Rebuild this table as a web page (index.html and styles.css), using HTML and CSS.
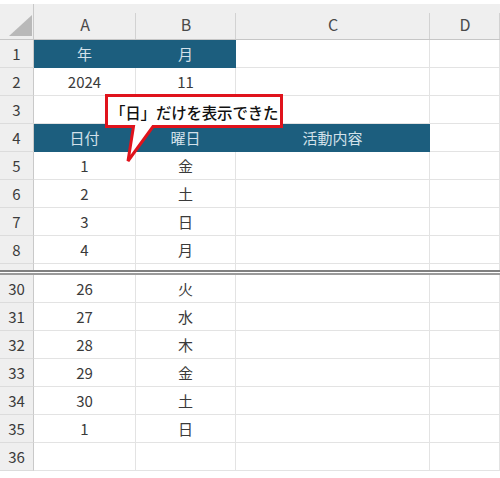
FILE: index.html
```html
<!DOCTYPE html>
<html lang="ja">
<head>
<meta charset="utf-8">
<link rel="stylesheet" href="styles.css">
</head>
<body>
<div class="sheet">
  <div class="topstrip"></div>
  <div class="row colhead">
    <div class="rh corner"><span class="tri"></span></div>
    <div class="c">A</div>
    <div class="c">B</div>
    <div class="c">C</div>
    <div class="c">D</div>
  </div>
  <div class="row"><div class="rh">1</div><div class="c dark">年</div><div class="c dark">月</div><div class="c"></div><div class="c"></div></div>
  <div class="row"><div class="rh">2</div><div class="c">2024</div><div class="c">11</div><div class="c"></div><div class="c"></div></div>
  <div class="row"><div class="rh">3</div><div class="c"></div><div class="c"></div><div class="c"></div><div class="c"></div></div>
  <div class="row"><div class="rh">4</div><div class="c dark">日付</div><div class="c dark">曜日</div><div class="c dark">活動内容</div><div class="c"></div></div>
  <div class="row"><div class="rh">5</div><div class="c">1</div><div class="c">金</div><div class="c"></div><div class="c"></div></div>
  <div class="row"><div class="rh">6</div><div class="c">2</div><div class="c">土</div><div class="c"></div><div class="c"></div></div>
  <div class="row"><div class="rh">7</div><div class="c">3</div><div class="c">日</div><div class="c"></div><div class="c"></div></div>
  <div class="row"><div class="rh">8</div><div class="c">4</div><div class="c">月</div><div class="c"></div><div class="c"></div></div>
  <div class="row partial"><div class="rh"></div><div class="c"></div><div class="c"></div><div class="c"></div><div class="c"></div></div>
  <div class="split"></div>
  <div class="row"><div class="rh">30</div><div class="c">26</div><div class="c">火</div><div class="c"></div><div class="c"></div></div>
  <div class="row"><div class="rh">31</div><div class="c">27</div><div class="c">水</div><div class="c"></div><div class="c"></div></div>
  <div class="row"><div class="rh">32</div><div class="c">28</div><div class="c">木</div><div class="c"></div><div class="c"></div></div>
  <div class="row"><div class="rh">33</div><div class="c">29</div><div class="c">金</div><div class="c"></div><div class="c"></div></div>
  <div class="row"><div class="rh">34</div><div class="c">30</div><div class="c">土</div><div class="c"></div><div class="c"></div></div>
  <div class="row"><div class="rh">35</div><div class="c">1</div><div class="c">日</div><div class="c"></div><div class="c"></div></div>
  <div class="row"><div class="rh">36</div><div class="c"></div><div class="c"></div><div class="c"></div><div class="c"></div></div>

  <div class="callout">
    <svg class="bubble" width="190" height="75" viewBox="0 0 190 75">
      <path d="M1.5 1.5 H176.5 V32.5 H48 L23 67 L28.5 32.5 H1.5 Z" fill="#fff" stroke="#e0131c" stroke-width="3" stroke-linejoin="miter"/>
    </svg>
    <div class="callout-text">「日」だけを表示できた</div>
  </div>
</div>
</body>
</html>
```

FILE: styles.css
```css
html, body {
  margin: 0;
  padding: 0;
  background: #fff;
}
body {
  font-family: "Noto Sans CJK JP", "Noto Sans", sans-serif;
  color: #3a3a3a;
}
.sheet {
  position: relative;
  width: 500px;
  height: 478px;
  overflow: hidden;
}
.topstrip {
  height: 4px;
  background: #fff;
}
.row {
  display: grid;
  grid-template-columns: 34px 102px 100px 194px 70px;
  height: 28px;
}
.rh {
  background: #efefef;
  border-right: 1px solid #c9c9c9;
  border-bottom: 1px solid #dcdcdc;
  display: flex;
  align-items: center;
  justify-content: center;
  font-size: 15px;
  color: #3c3c3c;
  box-sizing: border-box;
}
.c {
  border-right: 1px solid #e3e3e3;
  border-bottom: 1px solid #e3e3e3;
  display: flex;
  align-items: center;
  justify-content: center;
  font-size: 15px;
  box-sizing: border-box;
  color: #3a3a3a;
}
.c.dark {
  background: #1c5e7e;
  border-color: #1c5e7e;
  color: #d3e1ea;
}
.colhead {
  height: 36px;
  background: #efefef;
  border-bottom: 1px solid #c6c6c6;
  box-sizing: border-box;
}
.colhead .c {
  position: relative;
  border: none;
  color: #4a4a4a;
  font-size: 16px;
  padding-top: 5px;
}
.colhead .c::after {
  content: "";
  position: absolute;
  right: 0;
  top: 9px;
  bottom: 0;
  width: 1px;
  background: #d2d2d2;
}
.colhead .rh {
  border-bottom: none;
  border-right: 1px solid #c9c9c9;
}
.corner {
  position: relative;
}
.tri {
  position: absolute;
  right: 1px;
  bottom: 3px;
  width: 23px;
  height: 21px;
  background: #b9b9b9;
  clip-path: polygon(100% 0, 100% 100%, 0 100%);
}
.row.partial {
  height: 6px;
}
.row.partial .c,
.row.partial .rh {
  border-bottom: none;
}
.split {
  height: 5px;
  box-sizing: border-box;
  border-top: 2px solid #808080;
  border-bottom: 2px solid #9a9a9a;
  background: #fff;
}
.callout {
  position: absolute;
  left: 105px;
  top: 94px;
  width: 190px;
  height: 75px;
}
.bubble {
  position: absolute;
  left: 0;
  top: 0;
  display: block;
}
.callout-text {
  position: absolute;
  left: 5px;
  top: 5px;
  width: 170px;
  height: 25px;
  display: flex;
  align-items: center;
  font-size: 15.5px;
  font-weight: 500;
  color: #111;
  white-space: nowrap;
  letter-spacing: -0.2px;
}
```
